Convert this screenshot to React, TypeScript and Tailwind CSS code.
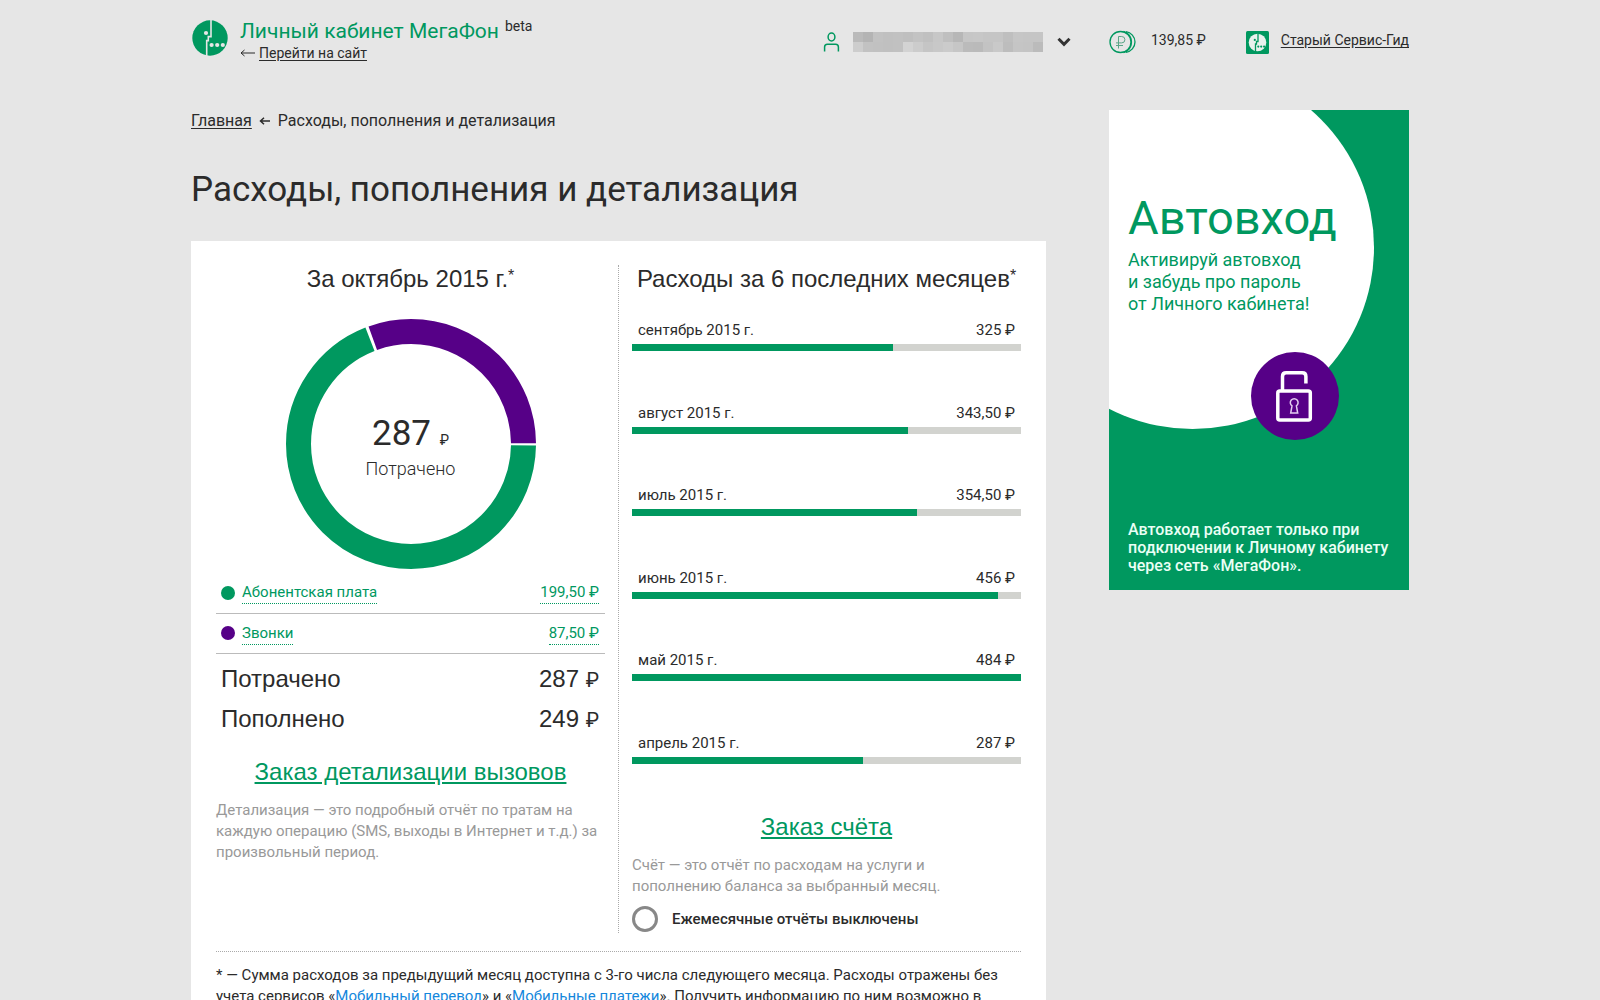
import { ReactNode, useState } from "react";

const expenses = [
  { month: "сентябрь 2015 г.", amount: "325", value: 325 },
  { month: "август 2015 г.", amount: "343,50", value: 343.5 },
  { month: "июль 2015 г.", amount: "354,50", value: 354.5 },
  { month: "июнь 2015 г.", amount: "456", value: 456 },
  { month: "май 2015 г.", amount: "484", value: 484 },
  { month: "апрель 2015 г.", amount: "287", value: 287 },
];
const maxExpense = 484;

const nameMask = [
  "#bababa #b4b4b4 #c2c2c2 #c0c0c0 #c1c1c1 #bfbfbf #c3c3c3 #c0c0c0 #c7c7c7 #bfbfbf #b7b7b7 #c6c6c6 #c7c7c7 #c5c5c5 #c5c5c5 #bfbfbf #c6c6c6 #c5c5c5 #c5c5c5",
  "#cdcdcd #c2c2c2 #c1c1c1 #c0c0c0 #c1c1c1 #d3d3d3 #cccccc #c5c5c5 #c8c8c8 #cbcbcb #c6c6c6 #bbbbbb #bababa #c3c3c3 #c9c9c9 #bdbdbd #c5c5c5 #c4c4c4 #bbbbbb",
].map((row) => row.split(" "));

function Logo() {
  return (
    <svg viewBox="0 0 36 36" className="size-9 shrink-0" aria-hidden="true">
      <circle cx="18" cy="18" r="17.7" fill="#00985f" />
      <path d="M19 0V16.6H16.3V20.6H14.7V36" fill="none" stroke="#e6e6e6" strokeWidth="1.6" />
      <circle cx="14" cy="13" r="2.1" fill="#e6e6e6" />
      <circle cx="19.6" cy="25" r="2.1" fill="#e6e6e6" />
      <circle cx="25.2" cy="25" r="2.1" fill="#e6e6e6" />
      <circle cx="30.8" cy="25" r="2.1" fill="#e6e6e6" />
    </svg>
  );
}

function UserIcon() {
  return (
    <svg viewBox="0 0 18 20" className="h-5 w-[18px]" fill="none" stroke="#00985f" strokeWidth="1.5" aria-hidden="true">
      <ellipse cx="8.5" cy="5" rx="3.4" ry="3.9" />
      <path d="M1.6 19.6V15c0-2 1-2.8 2.8-2.8h8.2c1.8 0 2.8.8 2.8 2.8v4.6" />
    </svg>
  );
}

function CoinsIcon() {
  return (
    <svg viewBox="0 0 27 24" className="h-6 w-[27px]" fill="none" stroke="#00985f" strokeWidth="1.3" aria-hidden="true">
      <circle cx="11.5" cy="12" r="10.5" />
      <path d="M14.5 1.3c4.7 1.2 8 5.4 8 10.7s-3.3 9.5-8 10.7" />
      <path d="M17 1.6c5 .8 9 5 9 10.4s-4 9.6-9 10.4" />
      <path d="M9.5 18.5V6.5h3.2a3 3 0 0 1 0 6.4H7M7 15.5h7" stroke="#5aa587" strokeWidth="1" />
    </svg>
  );
}

function ServiceGuideIcon() {
  return (
    <svg viewBox="0 0 23 23" className="size-[23px]" aria-hidden="true">
      <rect width="23" height="23" rx="1.5" fill="#00985f" />
      <circle cx="11.5" cy="11.5" r="8.8" fill="#e9f1ed" />
      <path d="M12 2V10.5H10.5V13H9.5V21" fill="none" stroke="#00985f" strokeWidth="1.3" />
      <circle cx="8.8" cy="8.9" r="1.1" fill="#00985f" />
      <circle cx="12.3" cy="15.6" r="1.1" fill="#00985f" />
      <circle cx="15.2" cy="15.6" r="1.1" fill="#00985f" />
      <circle cx="18.1" cy="15.6" r="1.1" fill="#00985f" />
    </svg>
  );
}

function Header() {
  return (
    <header className="flex h-[110px] items-start justify-between">
      <div className="flex pl-px pt-5">
        <Logo />
        <div className="ml-3">
          <div className="flex items-start">
            <span className="text-[21px] leading-[23px] text-[#00985f]">Личный кабинет МегаФон</span>
            <sup className="top-0 ml-[6px] text-sm leading-3">beta</sup>
          </div>
          <div className="flex items-center gap-1 text-sm leading-5">
            <svg viewBox="0 0 15 8" className="h-2 w-[15px]" fill="none" stroke="#2b2b2b" aria-hidden="true">
              <path d="M15 4H1M4.500 1 1 4l3.500 3" />
            </svg>
            <a href="#site" className="underline underline-offset-2">Перейти на сайт</a>
          </div>
        </div>
      </div>

      <div className="flex items-center pt-[30px] text-sm">
        <button type="button" aria-label="Выбор номера" className="flex items-center">
          <UserIcon />
          <svg viewBox="0 0 190 20" className="ml-3 h-5 w-[190px]" shapeRendering="crispEdges" aria-hidden="true">
            {nameMask.map((row, y) =>
              row.map((color, x) => (
                <rect key={`${x}-${y}`} x={x * 10} y={y * 10} width="10" height="10" fill={color} />
              ))
            )}
          </svg>
          <svg viewBox="0 0 14 10" className="ml-[14px] h-[10px] w-[14px]" aria-hidden="true">
            <path d="M1.5 1.800 7 7.300l5.500-5.500" fill="none" stroke="#333" strokeWidth="3" />
          </svg>
        </button>
        <span className="ml-[38px]"><CoinsIcon /></span>
        <span className="ml-[15px] pb-1">139,85 ₽</span>
        <a href="#old" className="ml-10 flex items-center gap-3">
          <ServiceGuideIcon />
          <span className="pb-1 underline underline-offset-2">Старый Сервис-Гид</span>
        </a>
      </div>
    </header>
  );
}

function Donut() {
  const r = 112.5;
  const len = 2 * Math.PI * r;
  const calls = 0.308 * len;
  const gap = 3;
  return (
    <div className="mt-[26px] grid place-items-center">
      <svg viewBox="0 0 250 250" className="col-start-1 row-start-1 size-[250px]" fill="none" strokeWidth="25" aria-hidden="true">
        <circle cx="125" cy="125" r={r} stroke="#00985f" strokeDasharray={`${len - calls - gap} ${len}`} strokeDashoffset={-gap / 2} />
        <circle
          cx="125"
          cy="125"
          r={r}
          stroke="#560087"
          strokeDasharray={`${calls - gap} ${len}`}
          strokeDashoffset={-(len - calls + gap / 2)}
        />
      </svg>
      <div className="col-start-1 row-start-1 pt-3 text-center">
        <p className="text-[35px] leading-[38px]">
          287 <span className="text-sm">₽</span>
        </p>
        <p className="text-lg font-light leading-8">Потрачено</p>
      </div>
    </div>
  );
}

function LegendRow({ color, label, amount }: { color: string; label: string; amount: string }) {
  return (
    <tr className="h-10 border-b border-[#bbb] text-[15px] text-[#00985f]">
      <td className="pl-[5px]">
        <div className="flex items-center">
          <span className={`mr-[7px] size-[14px] rounded-full ${color}`} />
          <a href="#details" className="border-b border-dotted border-[#00985f] leading-[22px]">{label}</a>
        </div>
      </td>
      <td className="pr-[6px] text-right">
        <a href="#details" className="inline-block border-b border-dotted border-[#00985f] leading-[22px]">{amount} ₽</a>
      </td>
    </tr>
  );
}

function Total({ label, amount }: { label: string; amount: string }) {
  return (
    <div className="flex h-10 items-center justify-between pl-[5px] pr-[6px] font-['Liberation_Sans',Arial,sans-serif] text-2xl">
      <dt>{label}</dt>
      <dd>
        {amount} <span className="font-['Roboto',sans-serif] text-xl">₽</span>
      </dd>
    </div>
  );
}

function ColumnTitle({ children }: { children: ReactNode }) {
  return (
    <h2 className="whitespace-nowrap text-center font-['Liberation_Sans',Arial,sans-serif] text-2xl leading-[28px]">
      {children}
      <sup className="-top-1.5 text-base leading-none">*</sup>
    </h2>
  );
}

function OrderLink({ href, children }: { href: string; children: ReactNode }) {
  return (
    <a
      href={href}
      className="self-center font-['Liberation_Sans',Arial,sans-serif] text-2xl leading-[28px] text-[#00985f] underline"
    >
      {children}
    </a>
  );
}

function Banner() {
  return (
    <aside className="relative flex h-[480px] w-[300px] shrink-0 flex-col justify-between bg-[#00985f] px-[19px] pb-[15px] pt-[83px]">
      <svg viewBox="0 0 300 480" className="absolute inset-0 size-full" fill="none" aria-hidden="true">
        <circle cx="83.5" cy="137.5" r="181.5" fill="#fff" />
        <circle cx="186" cy="286" r="44" fill="#560087" />
        <g stroke="#fff">
          <rect x="168.800" y="281" width="32.500" height="29" rx="2" strokeWidth="3.500" />
          <path d="M173.500 280V266.500c0-2.500 1.200-3.700 3.700-3.700h16c2.500 0 3.700 1.200 3.700 3.700V273.500" strokeWidth="3.500" />
          <path d="M183 295.800a3.900 3.900 0 1 1 4.400 0l1.300 7.200h-7z" stroke="#e3cdf0" strokeWidth="1.500" />
        </g>
      </svg>
      <div className="relative text-[#00985f]">
        <h2 className="text-[47px] leading-[50px]">Автовход</h2>
        <p className="mt-[6px] text-lg leading-[22px]">
          Активируй автовход
          <br />и забудь про пароль
          <br />от Личного кабинета!
        </p>
      </div>
      <p className="relative whitespace-nowrap text-base font-medium leading-[18px] text-[#eafff5]">
        Автовход работает только при
        <br />подключении к Личному кабинету
        <br />через сеть «МегаФон».
      </p>
    </aside>
  );
}

export default function App() {
  const [monthly, setMonthly] = useState(false);

  return (
    <div className="min-h-screen bg-[#e6e6e6] px-4 font-['Roboto',sans-serif] text-[#2b2b2b]">
      <div className="mx-auto max-w-[1218px]">
        <Header />
        <div className="flex items-start justify-between gap-[63px]">
          <main className="min-w-0 flex-1">
            <nav className="flex items-center gap-[7px] text-base leading-[22px]">
              <a href="#home" className="underline underline-offset-2">Главная</a>
              <svg viewBox="0 0 11 8" className="mr-px h-2 w-[11px]" fill="none" stroke="#2b2b2b" strokeWidth="1.5" aria-hidden="true">
                <path d="M11 4H1.500M5 .8 1.500 4 5 7.200" />
              </svg>
              <span>Расходы, пополнения и детализация</span>
            </nav>
            <h1 className="mb-[29px] mt-9 text-[35px] leading-[44px]">Расходы, пополнения и детализация</h1>

            <div className="bg-white px-[25px] pb-6 pt-6">
              <div className="flex gap-[13px]">
                <section className="flex flex-1 flex-col">
                  <ColumnTitle>За октябрь 2015 г.</ColumnTitle>
                  <Donut />
                  <table className="mt-1 w-full border-collapse">
                    <tbody>
                      <LegendRow color="bg-[#00985f]" label="Абонентская плата" amount="199,50" />
                      <LegendRow color="bg-[#560087]" label="Звонки" amount="87,50" />
                    </tbody>
                  </table>
                  <dl className="mb-[19px] mt-[5px]">
                    <Total label="Потрачено" amount="287" />
                    <Total label="Пополнено" amount="249" />
                  </dl>
                  <OrderLink href="#calls">Заказ детализации вызовов</OrderLink>
                  <p className="mt-[14px] text-[15px] leading-[21px] text-[#999]">
                    Детализация — это подробный отчёт по тратам на каждую операцию (SMS, выходы в Интернет и т.д.) за
                    произвольный период.
                  </p>
                </section>

                <div className="border-l border-dotted border-[#aaa]" />

                <section className="flex flex-1 flex-col">
                  <ColumnTitle>Расходы за 6 последних месяцев</ColumnTitle>
                  <ul className="mt-[27px] flex h-[444px] flex-col justify-between">
                    {expenses.map((e) => (
                      <li key={e.month}>
                        <div className="flex justify-between px-[6px] text-[15px] leading-5">
                          <span>{e.month}</span>
                          <span>{e.amount} ₽</span>
                        </div>
                        <div className="mt-1 h-[7px] bg-[#d2d3cf]">
                          <div className="h-full bg-[#00985f]" style={{ width: `${(e.value / maxExpense) * 100}%` }} />
                        </div>
                      </li>
                    ))}
                  </ul>
                  <div className="mt-[49px] flex flex-col">
                    <OrderLink href="#bill">Заказ счёта</OrderLink>
                  </div>
                  <p className="mt-[14px] text-[15px] leading-[21px] text-[#999]">
                    Счёт — это отчёт по расходам на услуги и
                    <br />пополнению баланса за выбранный месяц.
                  </p>
                  <label className="mb-px mt-[9px] flex items-center gap-[14px] text-[15px] font-medium">
                    <input
                      type="checkbox"
                      checked={monthly}
                      onChange={(e) => setMonthly(e.target.checked)}
                      className="size-[26px] appearance-none rounded-full border-3 border-[#888] bg-white checked:bg-[#00985f]"
                    />
                    Ежемесячные отчёты выключены
                  </label>
                </section>
              </div>

              <p className="mt-[18px] border-t border-dotted border-[#aaa] pt-[13px] text-[15px] leading-[21px]">
                * — Сумма расходов за предыдущий месяц доступна с 3-го числа следующего месяца. Расходы отражены без
                <br />
                учета сервисов «<a href="#transfer" className="text-[#1487dc] underline">Мобильный перевод</a>» и «
                <a href="#payments" className="text-[#1487dc] underline">Мобильные платежи</a>». Получить информацию по
                ним возможно в
              </p>
            </div>
          </main>
          <Banner />
        </div>
      </div>
    </div>
  );
}
